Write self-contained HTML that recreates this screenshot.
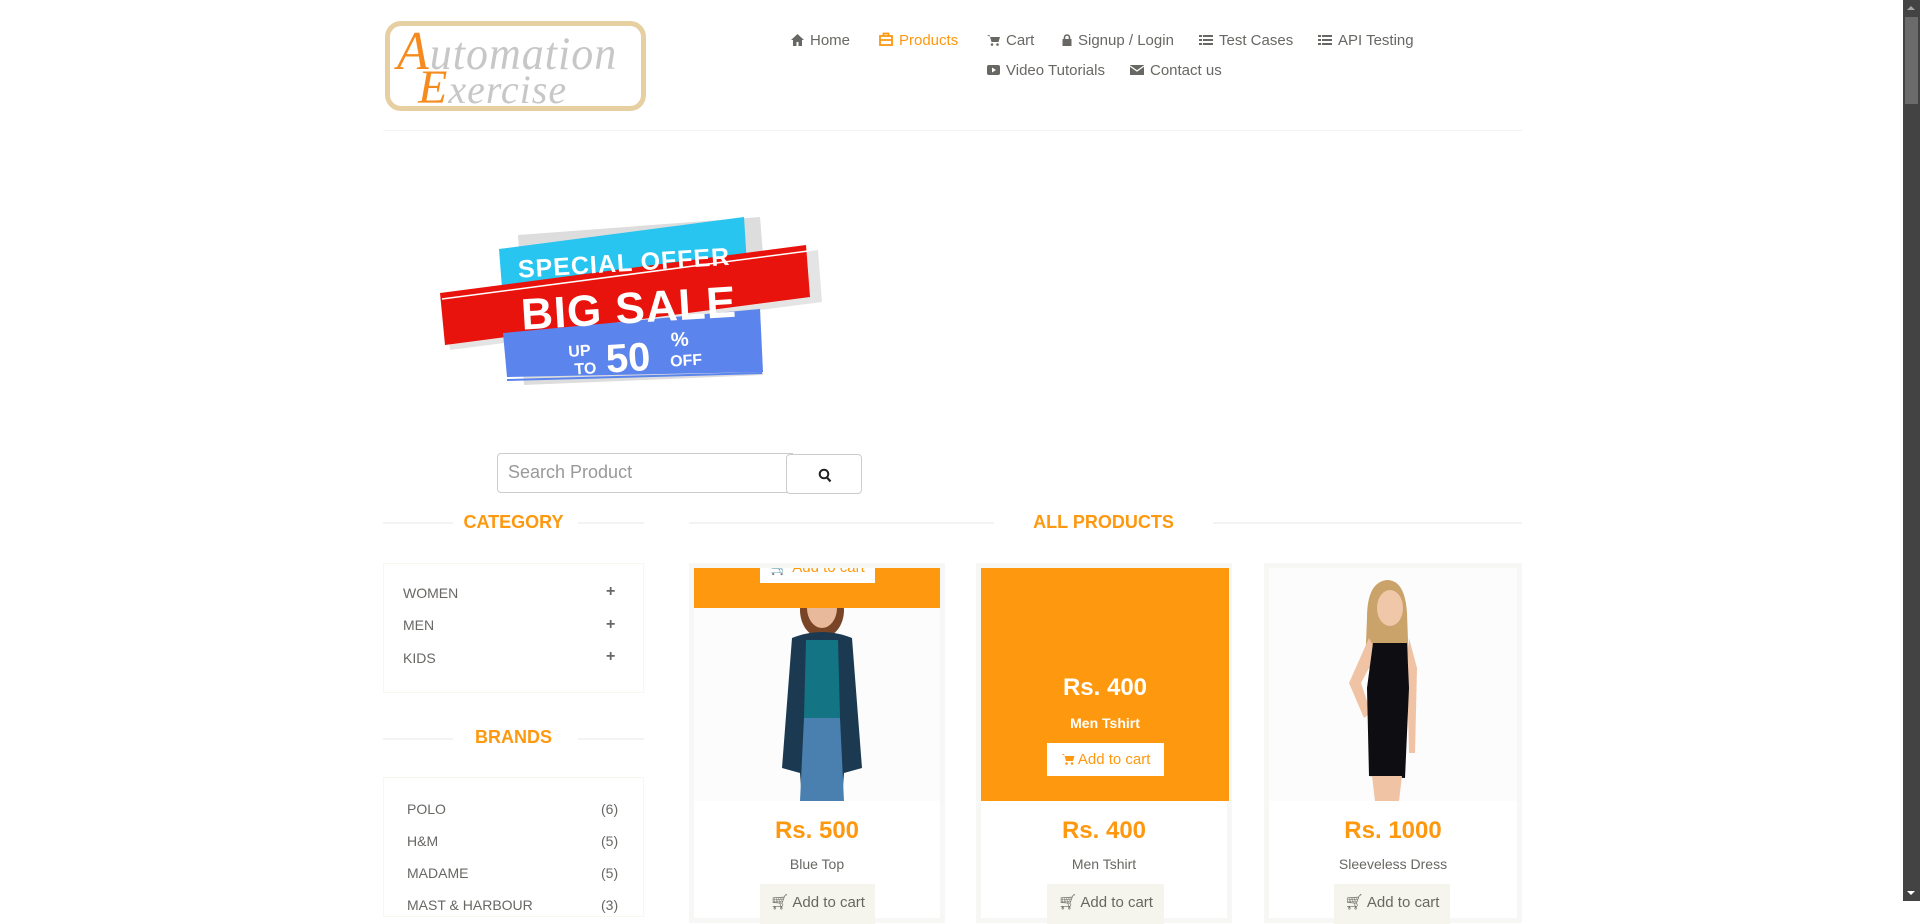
<!DOCTYPE html>
<html><head><meta charset="utf-8">
<style>
*{margin:0;padding:0;box-sizing:border-box}
body{width:1920px;height:901px;overflow:hidden;background:#fff;font-family:"Liberation Sans",Arial,sans-serif;color:#696763;position:relative}
.a{position:absolute}
.nav{font-size:15px;color:#696763;white-space:nowrap}
.nav svg{vertical-align:-1px;margin-right:6px}
.or{color:#FE980F}
.h2{font-size:18px;font-weight:bold;color:#FE980F;text-align:center}
.line{height:2px;background:#f3f3f1}
.box{border:1px solid #f7f7f0}
.cat{font-size:14px;color:#696763}
.card{border:5px solid #f7f7f5;border-top-width:5px;background:#fff}
.price{font-size:24px;font-weight:bold;color:#FE980F;text-align:center;width:100%}
.pname{font-size:14px;color:#696763;text-align:center;width:100%}
.btn{background:#F5F5ED;color:#696763;font-size:15px;text-align:center;line-height:38px;height:40px}
.sb{left:1903px;top:0;width:17px;height:901px;background:#434343}
</style></head><body>

<!-- logo -->
<div class="a" style="left:385px;top:21px;width:261px;height:90px;border:5px solid #e6d0a2;border-radius:16px;background:#fff"></div>
<div class="a" style="left:397px;top:22px;font-family:'Liberation Serif',serif;font-style:italic;font-size:44px;color:#c7c7c7;letter-spacing:1px;transform:scaleY(1.05)"><span style="color:#f58b1e;font-size:52px">A</span>utomation</div>
<div class="a" style="left:418px;top:60px;font-family:'Liberation Serif',serif;font-style:italic;font-size:40px;color:#c7c7c7;letter-spacing:1px"><span style="color:#f58b1e;font-size:48px">E</span>xercise</div>

<!-- nav -->
<div class="a nav" style="left:791px;top:32px"><svg width="13" height="12" viewBox="0 0 13 12"><path d="M6.5 0L0 6h2v6h3.5V8h2v4H11V6h2z" fill="#696763"/></svg>Home</div>
<div class="a nav or" style="left:879px;top:32px"><svg width="14" height="14" viewBox="0 0 14 14"><rect x="1" y="4" width="12" height="9" fill="none" stroke="#FE980F" stroke-width="1.8"/><path d="M4.5 4V1.5h5V4M1 8h12" stroke="#FE980F" stroke-width="1.8" fill="none"/></svg>Products</div>
<div class="a nav" style="left:987px;top:32px"><svg width="13" height="12" viewBox="0 0 13 12"><path d="M0 1h2.5l2 7h7l1.5-5H3.5" fill="#696763"/><circle cx="5" cy="10.5" r="1.3" fill="#696763"/><circle cx="10.5" cy="10.5" r="1.3" fill="#696763"/></svg>Cart</div>
<div class="a nav" style="left:1062px;top:32px"><svg width="10" height="12" viewBox="0 0 10 12"><path d="M2.5 5V3.5a2.5 2.5 0 015 0V5" fill="none" stroke="#696763" stroke-width="1.6"/><rect x="0.5" y="5" width="9" height="7" fill="#696763"/></svg>Signup / Login</div>
<div class="a nav" style="left:1199px;top:32px"><svg width="14" height="12" viewBox="0 0 14 12"><path d="M0 1h3v2H0zM4 1h10v2H4zM0 5h3v2H0zM4 5h10v2H4zM0 9h3v2H0zM4 9h10v2H4z" fill="#696763"/></svg>Test Cases</div>
<div class="a nav" style="left:1318px;top:32px"><svg width="14" height="12" viewBox="0 0 14 12"><path d="M0 1h3v2H0zM4 1h10v2H4zM0 5h3v2H0zM4 5h10v2H4zM0 9h3v2H0zM4 9h10v2H4z" fill="#696763"/></svg>API Testing</div>
<div class="a nav" style="left:987px;top:62px"><svg width="13" height="12" viewBox="0 0 13 12"><rect x="0" y="1" width="13" height="10" rx="2" fill="#696763"/><path d="M5 3.5v5l4-2.5z" fill="#fff"/></svg>Video Tutorials</div>
<div class="a nav" style="left:1130px;top:62px"><svg width="14" height="12" viewBox="0 0 14 12"><rect x="0" y="1" width="14" height="10" fill="#696763"/><path d="M0 2l7 5 7-5" stroke="#fff" stroke-width="1.3" fill="none"/></svg>Contact us</div>

<div class="a line" style="left:383px;top:130px;width:1139px;height:1px;background:#f3f3f1"></div>

<!-- sale banner -->
<svg class="a" style="left:430px;top:205px" width="400" height="190" viewBox="0 0 400 190">
<polygon points="88,30 330,12 335,75 92,93" fill="#ddd"/>
<polygon points="15,95 388,45 392,97 20,145" fill="#ddd" opacity=".8"/>
<polygon points="90,128 330,103 333,170 94,180" fill="#ddd"/>
<polygon points="69,44 314,12 317,60 72,83" fill="#27c5ef"/>
<polygon points="10,88 376,40 380,92 15,140" fill="#e8130c"/>
<polygon points="73,128 330,104 333,167 77,172" fill="#5b84ec"/>
<line x1="12" y1="94" x2="378" y2="46" stroke="#fff" stroke-width="1.5"/>
<line x1="77" y1="175" x2="332" y2="168" stroke="#5b84ec" stroke-width="2"/>
<g transform="rotate(-3.5 200 90)" font-family="'Liberation Sans',sans-serif" font-weight="bold" fill="#fff">
<text x="196" y="66" font-size="25" text-anchor="middle" letter-spacing="1">SPECIAL OFFER</text>
<text x="198" y="118" font-size="44" text-anchor="middle" letter-spacing="1">BIG SALE</text>
<text x="135" y="148" font-size="16">UP</text>
<text x="140" y="166" font-size="16">TO</text>
<text x="172" y="166" font-size="40">50</text>
<text x="238" y="144" font-size="20">%</text>
<text x="236" y="164" font-size="16">OFF</text>
</g>
</svg>

<!-- search -->
<div class="a" style="left:497px;top:453px;width:296px;height:40px;border:1px solid #ccc;border-radius:4px 0 0 4px;font-size:18px;color:#999;padding:8px 10px">Search Product</div>
<div class="a" style="left:786px;top:454px;width:76px;height:40px;border:1px solid #ccc;border-radius:4px;background:#fff"><svg style="position:absolute;left:31px;top:13px" width="14" height="15" viewBox="0 0 14 15"><circle cx="6" cy="6" r="4.3" fill="none" stroke="#222" stroke-width="2"/><path d="M9 9.5l3.5 4" stroke="#222" stroke-width="2.2"/></svg></div>

<!-- category -->
<div class="a line" style="left:383px;top:522px;width:70px"></div>
<div class="a line" style="left:578px;top:522px;width:66px"></div>
<div class="a h2" style="left:383px;top:512px;width:261px">CATEGORY</div>
<div class="a box" style="left:383px;top:563px;width:261px;height:130px"></div>
<div class="a cat" style="left:403px;top:585px">WOMEN</div>
<div class="a cat" style="left:403px;top:617px">MEN</div>
<div class="a cat" style="left:403px;top:650px">KIDS</div>
<div class="a" style="left:606px;top:576px;font-size:16px;font-weight:bold;color:#696763;line-height:32.5px">+<br>+<br>+</div>

<div class="a line" style="left:383px;top:738px;width:70px"></div>
<div class="a line" style="left:578px;top:738px;width:66px"></div>
<div class="a h2" style="left:383px;top:727px;width:261px">BRANDS</div>
<div class="a box" style="left:383px;top:777px;width:261px;height:140px"></div>
<div class="a cat" style="left:407px;top:793px;line-height:32px">POLO<br>H&amp;M<br>MADAME<br>MAST &amp; HARBOUR</div>
<div class="a cat" style="left:601px;top:793px;line-height:32px">(6)<br>(5)<br>(5)<br>(3)</div>

<!-- all products -->
<div class="a line" style="left:689px;top:522px;width:305px"></div>
<div class="a line" style="left:1213px;top:522px;width:309px"></div>
<div class="a h2" style="left:994px;top:512px;width:219px">ALL PRODUCTS</div>

<!-- card1 -->
<div class="a card" style="left:689px;top:563px;width:256px;height:360px"></div>
<div class="a" style="left:694px;top:568px;width:246px;height:233px;background:#fcfcfc"></div>
<svg class="a" style="left:694px;top:568px" width="246" height="233" viewBox="0 0 246 233">
<ellipse cx="128" cy="42" rx="22" ry="28" fill="#7a4426"/>
<ellipse cx="128" cy="40" rx="15" ry="20" fill="#e8b99a"/>
<path d="M98 70 Q128 58 158 70 L168 200 L150 205 L148 233 L108 233 L106 205 L88 200 Z" fill="#1b3a52"/>
<path d="M112 72 L144 72 L146 150 L110 150Z" fill="#137584"/>
<path d="M110 150 L146 150 L150 233 L106 233Z" fill="#4a80b0"/>
</svg>
<div class="a" style="left:694px;top:568px;width:246px;height:40px;background:#FE980F"></div>
<div class="a" style="left:760px;top:568px;width:115px;height:15px;background:#fff;overflow:hidden"><div style="margin-top:-10px;color:#FE980F;font-size:15px;text-align:center">🛒 Add to cart</div></div>
<div class="a price" style="left:689px;top:817px;width:256px">Rs. 500</div>
<div class="a pname" style="left:689px;top:856px;width:256px">Blue Top</div>
<div class="a btn" style="left:760px;top:884px;width:115px">&#x1F6D2;&#xFE0E; Add to cart</div>

<!-- card2 -->
<div class="a card" style="left:976px;top:563px;width:256px;height:360px"></div>
<div class="a" style="left:981px;top:568px;width:248px;height:233px;background:#FE980F"></div>
<div class="a" style="left:981px;top:674px;width:248px;text-align:center;color:#fff;font-size:24px;font-weight:bold">Rs. 400</div>
<div class="a" style="left:981px;top:715px;width:248px;text-align:center;color:#fff;font-size:14px;font-weight:bold">Men Tshirt</div>
<div class="a" style="left:1047px;top:743px;width:117px;height:33px;background:#fff;color:#FE980F;font-size:15px;text-align:center;line-height:33px"><svg width="14" height="12" viewBox="0 0 13 12" style="vertical-align:-1px"><path d="M0 1h2.5l2 7h7l1.5-5H3.5" fill="#FE980F"/><circle cx="5" cy="10.5" r="1.3" fill="#FE980F"/><circle cx="10.5" cy="10.5" r="1.3" fill="#FE980F"/></svg> Add to cart</div>
<div class="a price" style="left:976px;top:817px;width:256px">Rs. 400</div>
<div class="a pname" style="left:976px;top:856px;width:256px">Men Tshirt</div>
<div class="a btn" style="left:1047px;top:884px;width:117px">&#x1F6D2;&#xFE0E; Add to cart</div>

<!-- card3 -->
<div class="a card" style="left:1264px;top:563px;width:258px;height:360px"></div>
<div class="a" style="left:1269px;top:568px;width:248px;height:233px;background:#fcfcfc"></div>
<svg class="a" style="left:1269px;top:568px" width="248" height="233" viewBox="0 0 248 233">
<path d="M118 12 Q98 14 98 50 L96 100 L140 100 L138 45 Q136 12 118 12Z" fill="#caa36a"/>
<ellipse cx="121" cy="40" rx="13" ry="18" fill="#f1c7aa"/>
<path d="M100 70 L80 115 L95 150 L102 145 L92 115 L108 85Z" fill="#f0c3a5"/>
<path d="M140 70 L148 100 L146 185 L140 185 L138 105Z" fill="#f0c3a5"/>
<path d="M104 75 L138 75 L140 120 L136 210 L100 208 L98 120 Z" fill="#0d0d12"/>
<path d="M103 208 L133 208 L130 233 L106 233Z" fill="#f0c3a5"/>
</svg>
<div class="a price" style="left:1264px;top:817px;width:258px">Rs. 1000</div>
<div class="a pname" style="left:1264px;top:856px;width:258px">Sleeveless Dress</div>
<div class="a btn" style="left:1334px;top:884px;width:116px">&#x1F6D2;&#xFE0E; Add to cart</div>

<!-- scrollbar -->
<div class="a sb"></div>
<div class="a" style="left:1905px;top:17px;width:13px;height:87px;background:#6b6b6b"></div>
<div class="a" style="left:1907px;top:6px;width:0;height:0;border-left:4px solid transparent;border-right:4px solid transparent;border-bottom:4px solid #a3a3a3"></div>
<div class="a" style="left:1907px;top:891px;width:0;height:0;border-left:4px solid transparent;border-right:4px solid transparent;border-top:4px solid #fff"></div>
</body></html>
